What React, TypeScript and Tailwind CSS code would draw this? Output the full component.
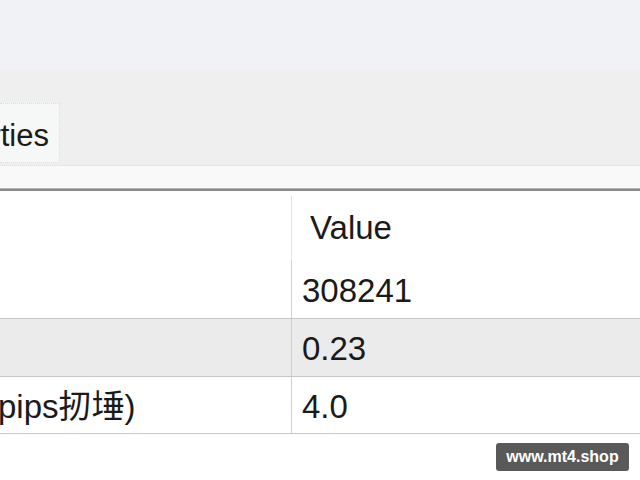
import React from "react";

const font = { fontFamily: '"Liberation Sans", "Noto Sans CJK SC", sans-serif' };

export default function App() {
  return (
    <div className="relative w-[640px] h-[480px] overflow-hidden bg-white text-[#1a1a1a]" style={font}>
      <div className="h-[70px] bg-[#f1f2f6]" />
      <div className="h-[95px] bg-[#efefef] flex items-end">
        <div className="w-[60px] h-[60px] mb-[2px] bg-[#f6f7f7] border border-dotted border-[#dcdcdc] border-l-0 overflow-hidden flex items-center justify-end pr-[10px] whitespace-nowrap">
          <span className="text-[31px] leading-none mt-[4px]">Properties</span>
        </div>
      </div>
      <div className="h-[23px] bg-[#f9f9f9] border-t border-[#e6e6e6]" />
      <div className="h-[1px] bg-[#b5b5b5]" />
      <div className="h-[2px] bg-[#8a8a8a]" />
      <div className="grid grid-cols-[291px_1fr]">
        <div className="h-[69px]" />
        <div className="h-[69px] flex pt-[5px]">
          <div className="w-[1px] bg-[#e3e3e3]" />
          <div className="flex-1 flex items-center pl-[18px] text-[33px]">Value</div>
        </div>

        <div className="h-[59px] border-b border-[#c6c6c6]" />
        <div className="h-[59px] border-b border-[#c6c6c6] flex">
          <div className="w-[1px] bg-[#cfcfcf]" />
          <div className="flex-1 flex items-center pl-[10px] pt-[3px] text-[33px]">308241</div>
        </div>

        <div className="h-[58px] bg-[#ebebeb] border-b border-[#c6c6c6]" />
        <div className="h-[58px] bg-[#ebebeb] border-b border-[#c6c6c6] flex">
          <div className="w-[1px] bg-[#cfcfcf]" />
          <div className="flex-1 flex items-center pl-[10px] pt-[3px] text-[33px]">0.23</div>
        </div>

        <div className="h-[57px] border-b border-[#c6c6c6] flex items-center pt-[3px] whitespace-nowrap text-[33px]">
          <span className="ml-[-2px]">pips扨埵)</span>
        </div>
        <div className="h-[57px] border-b border-[#c6c6c6] flex">
          <div className="w-[1px] bg-[#cfcfcf]" />
          <div className="flex-1 flex items-center pl-[10px] pt-[3px] text-[33px]">4.0</div>
        </div>
      </div>

      <div className="absolute left-[496px] top-[443px] w-[133px] h-[28px] rounded-[3px] bg-[#595959] flex items-center justify-center text-white text-[16px] font-bold">
        www.mt4.shop
      </div>
    </div>
  );
}
